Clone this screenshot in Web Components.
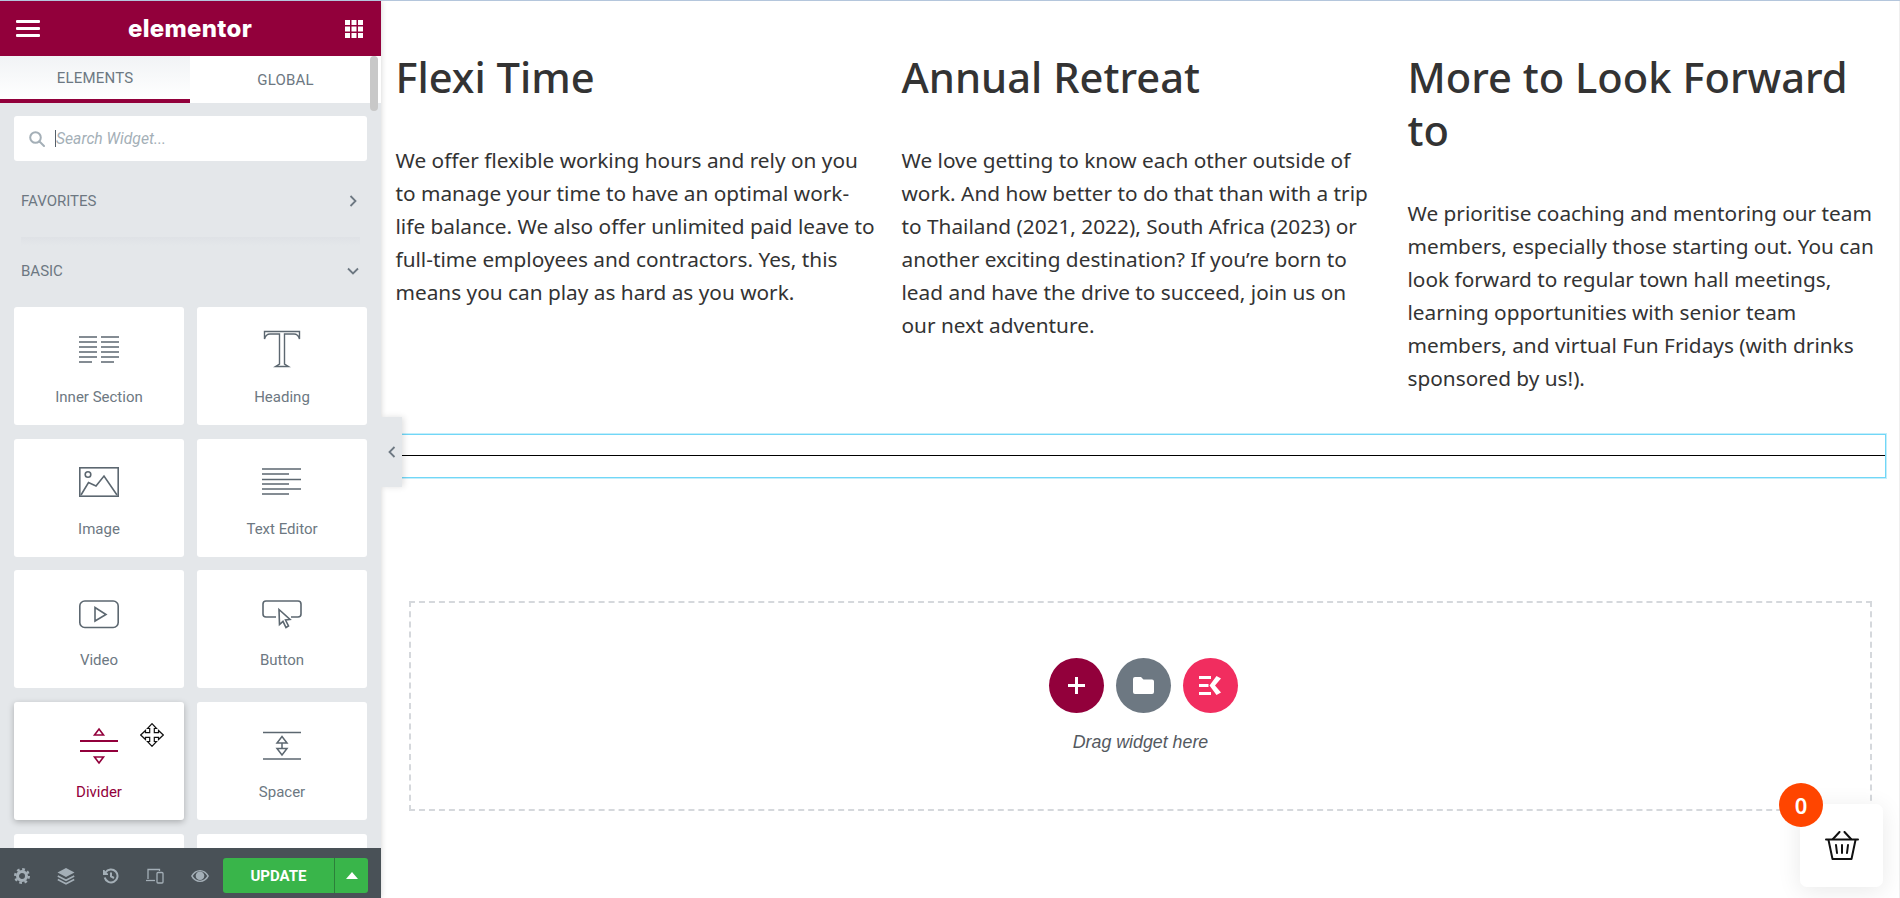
<!doctype html>
<html lang="en">
<head>
<meta charset="utf-8">
<title>Elementor editor</title>
<style>
	html, body {
		margin: 0; height: 100%;
		overflow: hidden;
		background: #FFF;
		}
	body {
		box-sizing: border-box;
		border-top: 1px solid #b4c6dc;
		display: flex;
		}
	el-card svg {
		display: block;
		}
</style>
</head>
<body>

<side-panel>
	<el-card slot=card label="Inner Section">
		<svg width=40 height=27 viewBox="0 0 40 27" fill=none stroke=#5c6770 stroke-width=1.6>
			<path d="M0 1H18M22 1H40M0 6H18M22 6H40M0 11H18M22 11H40M0 16H18M22 16H40M0 21H18M22 21H40M0 26H13M22 26H35"/>
		</svg>
	</el-card>
	<el-card slot=card label="Heading">
		<svg width=38 height=38 viewBox="0 0 38 38" fill=none stroke=#5c6770 stroke-width=1.4>
			<path d="M1.500 1.500H36.500V9C35.500 5.500 34 4 31 4H21.500V34L25.500 36.500H12.500L16.500 34V4H7C4 4 2.500 5.500 1.500 9Z"/>
		</svg>
	</el-card>
	<el-card slot=card label="Image">
		<svg width=40 height=30 viewBox="0 0 40 30" fill=none stroke=#5c6770 stroke-width=1.6>
			<rect x=.8 y=.8 width=38.400 height=28.400 />
			<circle cx=9 cy=7.500 r=2.800 />
			<path d="M2 28L9.500 15.500L17 19L25 9L38 28"/>
		</svg>
	</el-card>
	<el-card slot=card label="Text Editor">
		<svg width=40 height=27 viewBox="0 0 40 27" fill=none stroke=#5c6770 stroke-width=1.6>
			<path d="M0 1H39M0 6H27M0 11.500H39M0 16H27M0 21H39M0 26H27"/>
		</svg>
	</el-card>
	<el-card slot=card label="Video">
		<svg width=40 height=29 viewBox="0 0 40 29" fill=none stroke=#5c6770 stroke-width=1.6>
			<rect x=.8 y=1 width=38.400 height=26.500 rx=5 />
			<path d="M16 7.500L27 14.500L16 21Z"/>
		</svg>
	</el-card>
	<el-card slot=card label="Button">
		<svg width=40 height=29 viewBox="0 0 40 29" fill=none stroke=#5c6770 stroke-width=1.6>
			<path d="M14 17H4Q1 17 1 14V4Q1 1 4 1H36Q39 1 39 4V14Q39 17 36 17H29"/>
			<path d="M17 9.500L28 19.500L23.500 20L26.500 26L24 27.500L21 21.300L17.500 24.500Z"/>
		</svg>
	</el-card>
	<el-card slot=card label="Divider" active>
		<svg width=40 height=38 viewBox="0 0 40 38" fill=none stroke=#92003b stroke-width=1.600>
			<path d="M1 14H39M1 24H39" stroke-width=1.800 />
			<path d="M20 2L24.500 8H15.500ZM20 36L24.500 30H15.500Z"/>
		</svg>
	</el-card>
	<el-card slot=card label="Spacer">
		<svg width=40 height=30 viewBox="0 0 40 30" fill=none stroke=#5c6770 stroke-width=1.500>
			<path d="M1 1.500H39M1 28H39"/>
			<path d="M20 5.500L25 12H15ZM20 24L25 17.500H15ZM20 12V17.500"/>
		</svg>
	</el-card>
	<el-card slot=card></el-card>
	<el-card slot=card></el-card>
</side-panel>

<page-canvas>
	<feature-col heading="Flexi Time">We offer flexible working hours and rely on you to manage your time to have an optimal work-<br>life balance. We also offer unlimited paid leave to full-time employees and contractors. Yes, this means you can play as hard as you work.</feature-col>
	<feature-col heading="Annual Retreat">We love getting to know each other outside of work. And how better to do that than with a trip to Thailand (2021, 2022), South Africa (2023) or another exciting destination? If you’re born to lead and have the drive to succeed, join us on our next adventure.</feature-col>
	<feature-col heading="More to Look Forward to">We prioritise coaching and mentoring our team members, especially those starting out. You can look forward to regular town hall meetings, learning opportunities with senior team members, and virtual Fun Fridays (with drinks sponsored by us!).</feature-col>
</page-canvas>

<cart-button count=0></cart-button>

<script>

class ElCardElement extends HTMLElement {

	connectedCallback() {
		let label = this.getAttribute( "label" )
		this.shadowRoot.getElementById( "label" ).textContent = label ?? ""
		}

	constructor() {
		super()

		let shadow = this.attachShadow({ mode: "open" })

		shadow.innerHTML = `<style>
				:host {
					position: relative;
					display: block;
					height: 118px;
					box-sizing: border-box;
					background: #FFF;
					border-radius: 3px;
					color: #6d7882;
					}
				:host([active]) {
					color: #92003b;
					box-shadow: 0 2px 6px rgba(0,0,0,.25);
					}
				#icon {
					height: 73px;
					display: grid;
					place-items: end center;
					}
				:host([label="Heading"]) #icon { height: 61px; padding-bottom: 0; }
				#label {
					display: block;
					text-align: center;
					font: 15px/20px Roboto, sans-serif;
					}
				:host([label="Inner Section"]) #icon { height: 56px; }
				:host([label="Image"]) #icon { height: 58px; }
				:host([label="Text Editor"]) #icon { height: 56px; }
				:host([label="Video"]) #icon { height: 59px; }
				:host([label="Button"]) #icon { height: 59px; }
				:host([label="Divider"]) #icon { height: 63px; }
				:host([label="Spacer"]) #icon { height: 59px; }
				:host([label="Heading"]) #gap { height: 19px; }
				:host([label="Inner Section"]) #gap { height: 24px; }
				:host([label="Image"]) #gap { height: 22px; }
				:host([label="Text Editor"]) #gap { height: 24px; }
				:host([label="Video"]) #gap { height: 21px; }
				:host([label="Button"]) #gap { height: 21px; }
				:host([label="Divider"]) #gap { height: 17px; }
				:host([label="Spacer"]) #gap { height: 21px; }
				#move {
					position: absolute; left: 126px; top: 21px;
					display: none;
					}
				:host([active]) #move {
					display: block;
					}
				</style>
			<div id=icon ><slot></slot></div>
			<div id=gap ></div>
			<span id=label ></span>
			<svg id=move width=24 height=24 viewBox="0 0 24 24" fill=#FFF stroke=#111 stroke-width=1.200>
				<path d="M12 .7L16.500 5.500H14.300V9.700H18.500V7.500L23.300 12L18.500 16.500V14.300H14.300V18.500H16.500L12 23.300L7.500 18.500H9.700V14.300H5.500V16.500L.7 12L5.500 7.500V9.700H9.700V5.500H7.500Z"/>
			</svg>`
		}

	static {
		customElements.define( "el-card", this )
		}
	}


class SidePanelElement extends HTMLElement {

	constructor() {
		super()

		let shadow = this.attachShadow({ mode: "open" })

		shadow.innerHTML = `<style>
				:host {
					position: relative;
					z-index: 2;
					flex: none;
					width: 381px; height: 100%;
					display: flex; flex-direction: column;
					background: #e4e7ea;
					box-shadow: 0 0 6px rgba(0,0,0,.18);
					font-family: Roboto, sans-serif;
					color: #6d7882;
					}
				#head {
					flex: none;
					height: 55px;
					padding: 0 18px 0 16px;
					display: flex; align-items: center; justify-content: space-between;
					background: #92003b;
					color: #FFF;
					}
				#logo {
					font: 800 24px/1 Inter, sans-serif;
					letter-spacing: .3px;
					margin-right: 5px;
					}
				#tabs {
					flex: none;
					height: 47px;
					display: grid; grid-template-columns: 190px 1fr;
					background: #FFF;
					font-size: 15px; letter-spacing: .2px;
					}
				#tabs span {
					display: grid; place-items: center;
					box-sizing: border-box;
					}
				#tabs .on {
					background: linear-gradient( #f1f3f5, #FFF );
					border-bottom: 4px solid #92003b;
					}
				#thumb {
					position: absolute; right: 3px; top: 55px;
					width: 8px; height: 55px;
					border-radius: 4px;
					background: #c8c8c8;
					}
				#scroll {
					flex: 1;
					min-height: 0;
					overflow: hidden;
					padding: 13px 14px 0;
					}
				#search {
					height: 45px;
					box-sizing: border-box;
					padding-left: 15px;
					display: flex; align-items: center; gap: 10px;
					background: #FFF;
					border-radius: 3px;
					}
				#search em {
					border-left: 1px solid #55606a;
					font: italic 15.700px/17px Roboto, sans-serif;
					color: #a4afb7;
					}
				.cat {
					height: 32px;
					padding: 0 7px;
					display: flex; align-items: center; justify-content: space-between;
					font-size: 15px;
					}
				#fav { margin-top: 24px; padding-right: 10px; }
				#sep {
					height: 9px;
					margin: 20px 7px 0;
					background: linear-gradient( #dfe2e6, #e4e7ea );
					}
				#basic { margin: 9px 0 20px; padding-right: 8px; }
				#cards {
					display: grid;
					grid-template-columns: 170px 170px;
					column-gap: 13px; row-gap: 13.700px;
					}
				#foot {
					flex: none;
					height: 50px;
					position: relative;
					padding: 10px 13px 5px 14px;
					box-sizing: border-box;
					display: flex; align-items: center;
					background: #495157;
					}
				#tools {
					flex: 1;
					display: flex; justify-content: space-between; align-items: center;
					padding-right: 14px;
					}
				#tools svg {
					display: block;
					}
				#update {
					width: 145px; height: 35px;
					display: grid; grid-template-columns: 111px 1fr;
					background: #39b54a;
					border-radius: 3px;
					color: #FFF;
					}
				#update span {
					display: grid; place-items: center;
					font: 700 15px Roboto, sans-serif;
					}
				#update span + span {
					border-left: 1px solid #2c7f3a;
					}
				#handle {
					position: absolute; left: 100%; top: 416px;
					width: 21px; height: 70px;
					display: grid; place-items: center;
					background: #e4e7ea;
					box-shadow: 2px 0 6px rgba(0,0,0,.12);
					clip-path: inset( -10px -10px -10px 0 );
					}
				</style>
			<header id=head >
				<svg width=24 height=17 viewBox="0 0 24 17" fill=#FFF >
					<rect width=24 height=3 rx=1 y=0 /><rect width=24 height=3 rx=1 y=7 /><rect width=24 height=3 rx=1 y=14 />
				</svg>
				<span id=logo >elementor</span>
				<svg width=18 height=18 viewBox="0 0 18 18" fill=#FFF >
					<path d="M0 0h5v5H0zM6.500 0h5v5h-5zM13 0h5v5h-5zM0 6.500h5v5H0zM6.500 6.500h5v5h-5zM13 6.500h5v5h-5zM0 13h5v5H0zM6.500 13h5v5h-5zM13 13h5v5h-5z"/>
				</svg>
			</header>
			<nav id=tabs >
				<span class=on >ELEMENTS</span>
				<span>GLOBAL</span>
			</nav>
			<div id=thumb ></div>
			<div id=scroll >
				<div id=search >
					<svg width=16 height=16 viewBox="0 0 16 16" fill=none stroke=#a4afb7 stroke-width=2 >
						<circle cx=6.500 cy=6.500 r=5.300 /><path d="M10.500 10.500L15 15" stroke-linecap=round />
					</svg>
					<em>Search Widget...</em>
				</div>
				<div class=cat id=fav >
					<span>FAVORITES</span>
					<svg width=8 height=12 viewBox="0 0 8 12" fill=none stroke=#6d7882 stroke-width=1.800 ><path d="M1.500 1L6.500 6L1.500 11"/></svg>
				</div>
				<div id=sep ></div>
				<div class=cat id=basic >
					<span>BASIC</span>
					<svg width=12 height=8 viewBox="0 0 12 8" fill=none stroke=#6d7882 stroke-width=1.800 ><path d="M1 1.500L6 6.500L11 1.500"/></svg>
				</div>
				<div id=cards ><slot name=card ></slot></div>
			</div>
			<footer id=foot >
				<div id=tools >
					<svg width=16 height=16 viewBox="0 0 16 16" fill=none stroke=#a4afb7 >
						<circle cx=8 cy=8 r=4.500 stroke-width=3 />
						<circle cx=8 cy=8 r=6.800 stroke-width=2.400 stroke-dasharray="2.700 2.640" />
					</svg>
					<svg width=18 height=18 viewBox="0 0 18 18" fill=none stroke=#a4afb7 stroke-width=1.600 >
						<path d="M9 1L17.500 5.500L9 10L.5 5.500Z" fill=#a4afb7 stroke=none />
						<path d="M.8 9L9 13.300L17.200 9"/>
						<path d="M.8 12.500L9 16.800L17.200 12.500"/>
					</svg>
					<svg width=16 height=16 viewBox="0 0 16 16" fill=none stroke=#a4afb7 stroke-width=2 >
						<path d="M2.500 4.500A6.500 6.500 0 1 1 1.700 9.500"/>
						<path d="M.8 2V6.200H5" stroke-width=1.600 fill=#a4afb7 />
						<path d="M8 4.500V8.500L11 10"/>
					</svg>
					<svg width=18 height=16 viewBox="0 0 18 16" fill=none stroke=#a4afb7 stroke-width=1.300 >
						<path d="M2 11V1.500H13.500V3"/><path d="M0 12.500H9"/>
						<rect x=11 y=4.500 width=6 height=10.500 rx=1 />
					</svg>
					<svg width=18 height=12 viewBox="0 0 18 12" fill=#a4afb7 >
						<path fill-rule=evenodd d="M0 6C2 2 5.500 0 9 0S16 2 18 6C16 10 12.500 12 9 12S2 10 0 6ZM1.800 6C3.500 8.900 6.200 10.700 9 10.700S14.500 8.900 16.200 6C14.500 3.100 11.800 1.300 9 1.300S3.500 3.100 1.800 6Z"/>
						<circle cx=9 cy=5.800 r=4.300 />
					</svg>
				</div>
				<div id=update >
					<span>UPDATE</span>
					<span><svg width=12 height=7 viewBox="0 0 12 7" fill=#FFF ><path d="M6 0L12 7H0Z"/></svg></span>
				</div>
			</footer>
			<div id=handle >
				<svg width=8 height=12 viewBox="0 0 8 12" fill=none stroke=#6d7882 stroke-width=1.800 ><path d="M6.500 1L1.500 6L6.500 11"/></svg>
			</div>`
		}

	static {
		customElements.define( "side-panel", this )
		}
	}


class FeatureColElement extends HTMLElement {

	connectedCallback() {
		this.shadowRoot.getElementById( "heading" ).textContent = this.getAttribute( "heading" )
		}

	constructor() {
		super()

		let shadow = this.attachShadow({ mode: "open" })

		// first column runs a little wider, its third line must keep the "to"
		shadow.innerHTML = `<style>
				:host {
					display: block;
					padding: 0 14px 0 14.500px;
					font-family: "Noto Sans", "Open Sans", sans-serif;
					color: #333;
					}
				:host(:first-child) {
					padding-right: 8px;
					}
				h2 {
					margin: 0 0 41px;
					font-weight: 500; font-size: 41.700px; line-height: 53px;
					}
				p {
					margin: 0;
					font-size: 20.800px; line-height: 33px;
					}
				</style>
			<h2 id=heading ></h2>
			<p><slot></slot></p>`
		}

	static {
		customElements.define( "feature-col", this )
		}
	}


class DropZoneElement extends HTMLElement {

	constructor() {
		super()

		let shadow = this.attachShadow({ mode: "open" })

		shadow.innerHTML = `<style>
				:host {
					display: flex; flex-direction: column; align-items: center;
					box-sizing: border-box;
					height: 210px;
					padding-top: 54.500px;
					border: 2px dashed #d5d8dc;
					}
				#buttons {
					display: flex; gap: 12px;
					margin-left: 5px;
					}
				#buttons span {
					width: 55px; height: 55px;
					display: grid; place-items: center;
					border-radius: 50%;
					}
				#add { background: #92003b; }
				#folder { background: #6d7882; }
				#kit { background: #f12d5f; }
				em {
					margin-top: 19.500px;
					font: italic 17.800px/20px "Liberation Sans", sans-serif;
					color: #54595f;
					}
				</style>
			<div id=buttons >
				<span id=add ><svg width=17 height=17 viewBox="0 0 17 17" stroke=#FFF stroke-width=3 ><path d="M8.500 0V17M0 8.500H17"/></svg></span>
				<span id=folder ><svg width=21 height=17 viewBox="0 0 21 17" fill=#FFF ><path d="M2 0H8L10.500 2.500H19Q21 2.500 21 4.500V15Q21 17 19 17H2Q0 17 0 15V2Q0 0 2 0Z"/></svg></span>
				<span id=kit ><svg width=22 height=19 viewBox="0 0 22 19" fill=#FFF stroke=none >
					<path d="M0 0H12V3H0ZM0 8H9.500V11H0ZM0 16H12V19H0Z"/>
					<path d="M17.500 0L22 2.500L16 9.500L22 16.500L17.500 19L10.500 9.500Z"/>
				</svg></span>
			</div>
			<em>Drag widget here</em>`
		}

	static {
		customElements.define( "drop-zone", this )
		}
	}


class PageCanvasElement extends HTMLElement {

	constructor() {
		super()

		let shadow = this.attachShadow({ mode: "open" })

		shadow.innerHTML = `<style>
				:host {
					flex: 1;
					min-width: 0;
					display: block;
					box-sizing: border-box;
					border-right: 1px solid #efefef;
					padding-top: 49px;
					}
				#cols {
					display: grid; grid-template-columns: repeat( 3, 1fr );
					height: 383.500px;
					}
				#rule {
					margin: 0 13px 0 15px;
					height: 44px;
					display: flex; align-items: center;
					border: 1px solid #71d7f7;
					box-shadow: 0 0 0 1px #c4eefb;
					box-sizing: border-box;
					}
				#rule i {
					display: block;
					width: 100%; height: 1px;
					background: #000;
					}
				drop-zone {
					margin: 123.500px 27px 0 28px;
					}
				</style>
			<div id=cols ><slot></slot></div>
			<div id=rule ><i></i></div>
			<drop-zone></drop-zone>`
		}

	static {
		customElements.define( "page-canvas", this )
		}
	}


class CartButtonElement extends HTMLElement {

	connectedCallback() {
		this.shadowRoot.getElementById( "count" ).textContent = this.getAttribute( "count" )
		}

	constructor() {
		super()

		let shadow = this.attachShadow({ mode: "open" })

		shadow.innerHTML = `<style>
				:host {
					position: fixed; left: 1800px; top: 804px;
					z-index: 3;
					width: 83px; height: 83px;
					display: grid; place-items: center;
					background: #FFF;
					border-radius: 7px;
					box-shadow: 0 4px 24px rgba(0,0,0,.09);
					}
				#count {
					position: absolute; left: -21px; top: -21px;
					width: 44px; height: 44px;
					display: grid; place-items: center;
					border-radius: 50%;
					background: #ff4500;
					color: #FFF;
					font: 600 22px "Noto Sans", sans-serif;
					}
				</style>
			<span id=count ></span>
			<svg width=34 height=30 viewBox="0 0 34 30" fill=none stroke=#111 stroke-width=2 stroke-linecap=round stroke-linejoin=round >
				<path d="M1 8.500H33"/>
				<path d="M3.500 9L7.500 28H26.500L30.500 9"/>
				<path d="M8 8L14.500 1M26 8L19.500 1"/>
				<path d="M11 14L12 22M17 14V22M23 14L22 22"/>
			</svg>`
		}

	static {
		customElements.define( "cart-button", this )
		}
	}

</script>
</body>
</html>
